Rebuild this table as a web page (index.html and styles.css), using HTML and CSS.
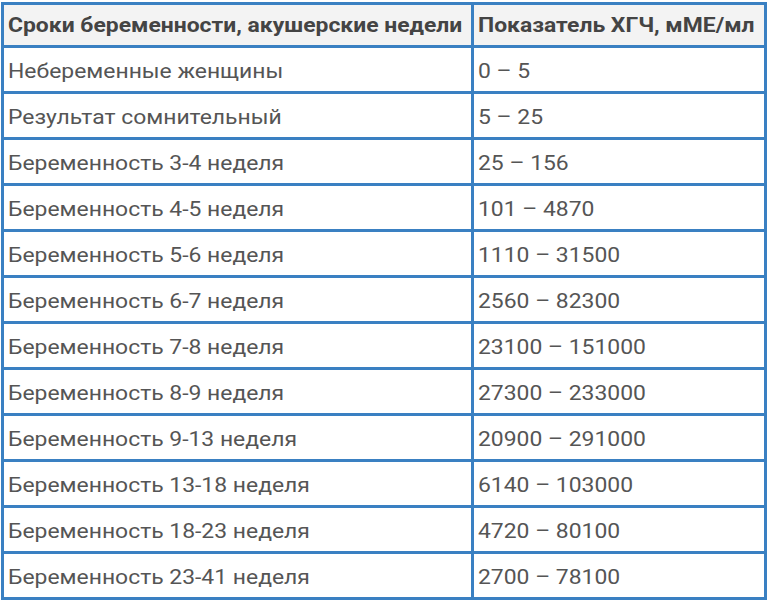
FILE: index.html
```html
<!DOCTYPE html>
<html lang="ru">
<head>
<meta charset="utf-8">
<link rel="stylesheet" href="styles.css">
</head>
<body>
<div class="table">
  <div class="cell head"><span>Сроки беременности, акушерские недели</span></div>
  <div class="cell head"><span>Показатель ХГЧ, мМЕ/мл</span></div>
  <div class="cell"><span>Небеременные женщины</span></div><div class="cell"><span>0 – 5</span></div>
  <div class="cell"><span>Результат сомнительный</span></div><div class="cell"><span>5 – 25</span></div>
  <div class="cell"><span>Беременность 3-4 неделя</span></div><div class="cell"><span>25 – 156</span></div>
  <div class="cell"><span>Беременность 4-5 неделя</span></div><div class="cell"><span>101 – 4870</span></div>
  <div class="cell"><span>Беременность 5-6 неделя</span></div><div class="cell"><span>1110 – 31500</span></div>
  <div class="cell"><span>Беременность 6-7 неделя</span></div><div class="cell"><span>2560 – 82300</span></div>
  <div class="cell"><span>Беременность 7-8 неделя</span></div><div class="cell"><span>23100 – 151000</span></div>
  <div class="cell"><span>Беременность 8-9 неделя</span></div><div class="cell"><span>27300 – 233000</span></div>
  <div class="cell"><span>Беременность 9-13 неделя</span></div><div class="cell"><span>20900 – 291000</span></div>
  <div class="cell"><span>Беременность 13-18 неделя</span></div><div class="cell"><span>6140 – 103000</span></div>
  <div class="cell"><span>Беременность 18-23 неделя</span></div><div class="cell"><span>4720 – 80100</span></div>
  <div class="cell"><span>Беременность 23-41 неделя</span></div><div class="cell"><span>2700 – 78100</span></div>
</div>
</body>
</html>
```
FILE: styles.css
```css
html, body {
  margin: 0;
  padding: 0;
  background: #ffffff;
}
body {
  padding: 2px 0 0 1px;
  font-family: Roboto, "Liberation Sans", sans-serif;
}
.table {
  display: grid;
  grid-template-columns: 470px 293px;
  grid-template-rows: 43px repeat(12, 46px);
  width: 766px;
  box-sizing: border-box;
  border-left: 3px solid #3a80c2;
  border-top: 3px solid #3a80c2;
}
.cell {
  box-sizing: border-box;
  display: flex;
  align-items: center;
  padding: 2px 0 0 4px;
  font-size: 20px;
  color: #555555;
  border-right: 3px solid #3a80c2;
  border-bottom: 3px solid #3a80c2;
  white-space: nowrap;
  overflow: hidden;
}
.cell span {
  display: inline-block;
  transform: scaleX(1.145);
  transform-origin: left center;
}
.cell.head {
  background: #f3f3f3;
  color: #444444;
  font-weight: bold;
  padding-top: 0;
  padding-left: 4px;
}
```
